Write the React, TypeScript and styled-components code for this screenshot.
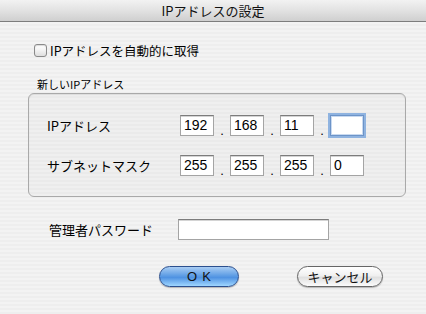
import { Fragment } from 'react';
import styled, { createGlobalStyle } from 'styled-components';

const GlobalStyle = createGlobalStyle`
  html, body {
    margin: 0;
    padding: 0;
  }
  body {
    font-family: "Noto Sans CJK JP", "Liberation Sans", sans-serif;
    color: #000;
  }
`;

const Window = styled.div`
  width: 426px;
  height: 314px;
  overflow: hidden;
  background: repeating-linear-gradient(
    to bottom,
    #eeeeee 0px,
    #eeeeee 2px,
    #f3f3f3 2px,
    #f3f3f3 4px
  );
  display: flex;
  flex-direction: column;
`;

const TitleBar = styled.div`
  height: 21px;
  border-bottom: 1px solid #7d7d7d;
  background: linear-gradient(to bottom, #f2f2f2 0%, #e2e2e2 50%, #cfcfcf 100%);
  display: flex;
  align-items: center;
  justify-content: center;
  font-size: 13px;
  line-height: 21px;
  color: #111;
`;

const Content = styled.div`
  padding: 0 0 0 28px;
  display: flex;
  flex-direction: column;
`;

const CheckRow = styled.label`
  margin-top: 21px;
  margin-left: 6px;
  height: 15px;
  display: flex;
  align-items: center;
  gap: 3px;
  font-size: 12.5px;
  line-height: 15px;
`;

const CheckBox = styled.span`
  width: 11px;
  height: 11px;
  border: 1px solid #8a8a8a;
  border-radius: 3px;
  background: linear-gradient(to bottom, #ffffff 0%, #f2f2f2 50%, #dedede 100%);
  box-shadow: inset 0 1px 1px rgba(0, 0, 0, 0.15);
`;

const GroupLabel = styled.div`
  margin-top: 20px;
  margin-left: 9px;
  font-size: 11px;
  line-height: 13px;
`;

const GroupBox = styled.div`
  margin-top: 2px;
  width: 358px;
  height: 81px;
  border: 1px solid #a9a9a9;
  border-radius: 6px;
  background: rgba(0, 0, 0, 0.015);
  box-shadow: inset 0 1px 1px rgba(0, 0, 0, 0.08);
  padding: 21px 0 0 18px;
  box-sizing: content-box;
  display: flex;
  flex-direction: column;
  gap: 19px;
`;

const FieldRow = styled.div<{ $labelWidth: number }>`
  display: grid;
  grid-template-columns: ${({ $labelWidth }) => $labelWidth}px auto;
  align-items: center;
  height: 21px;
`;

const RowLabel = styled.span`
  font-size: 13px;
  line-height: 15px;
`;

const Octets = styled.div`
  display: flex;
  align-items: flex-end;
`;

const Dot = styled.span`
  width: 16px;
  text-align: center;
  font-size: 13px;
  line-height: 10px;
  font-family: "Liberation Sans", sans-serif;
`;

const Field = styled.div<{ $width: number; $focused?: boolean }>`
  width: ${({ $width }) => $width}px;
  height: 21px;
  box-sizing: border-box;
  background: #fff;
  border: 1px solid #a4a4a4;
  border-top-color: #7c7c7c;
  box-shadow: inset 0 1px 0 #d4d4d4;
  padding: 0 3px;
  font-family: "Liberation Sans", sans-serif;
  font-size: 14px;
  line-height: 18px;
  ${({ $focused }) =>
    $focused &&
    `
    border: 1px solid #6d94c8;
    box-shadow: 0 0 0 2px #8fb3e0, inset 0 0 0 1px #c9daf0;
  `}
`;

const PasswordRow = styled(FieldRow)`
  margin-top: 22px;
  padding-left: 21px;
`;

const Buttons = styled.div`
  margin-top: 26px;
  padding-left: 131px;
  display: flex;
  gap: 58px;
`;

const Button = styled.button<{ $width: number; $primary?: boolean }>`
  width: ${({ $width }) => $width}px;
  height: 21px;
  border-radius: 11px;
  padding: 0;
  font-family: ${({ $primary }) =>
    $primary ? '"Liberation Sans", sans-serif' : '"Noto Sans CJK JP", "Liberation Sans", sans-serif'};
  font-size: 13px;
  line-height: 19px;
  color: #111;
  border: 1px solid ${({ $primary }) => ($primary ? '#2b4f8e' : '#666')};
  background: ${({ $primary }) =>
    $primary
      ? 'linear-gradient(to bottom, #a9cdf3 0%, #5f9ee5 45%, #4f92e2 55%, #9fd6ff 100%)'
      : 'linear-gradient(to bottom, #ffffff 0%, #f0f0f0 45%, #e0e0e0 55%, #fbfbfb 100%)'};
  box-shadow: 0 1px 1px rgba(0, 0, 0, 0.25);
  letter-spacing: ${({ $primary }) => ($primary ? '5px' : '0')};
  text-indent: ${({ $primary }) => ($primary ? '5px' : '0')};
`;

const octets = {
  ip: ['192', '168', '11', ''],
  mask: ['255', '255', '255', '0'],
};

export default function App() {
  return (
    <>
      <GlobalStyle />
      <Window>
        <TitleBar>IPアドレスの設定</TitleBar>
        <Content>
          <CheckRow>
            <CheckBox />
            IPアドレスを自動的に取得
          </CheckRow>
          <GroupLabel>新しいIPアドレス</GroupLabel>
          <GroupBox>
            <FieldRow $labelWidth={133}>
              <RowLabel>IPアドレス</RowLabel>
              <Octets>
                {octets.ip.map((v, i) => (
                  <Fragment key={i}>
                    {i > 0 && <Dot>.</Dot>}
                    <Field $width={34} $focused={i === 3}>
                      {v}
                    </Field>
                  </Fragment>
                ))}
              </Octets>
            </FieldRow>
            <FieldRow $labelWidth={133}>
              <RowLabel>サブネットマスク</RowLabel>
              <Octets>
                {octets.mask.map((v, i) => (
                  <Fragment key={i}>
                    {i > 0 && <Dot>.</Dot>}
                    <Field $width={34}>{v}</Field>
                  </Fragment>
                ))}
              </Octets>
            </FieldRow>
          </GroupBox>
          <PasswordRow $labelWidth={129}>
            <RowLabel>管理者パスワード</RowLabel>
            <Field $width={151} />
          </PasswordRow>
          <Buttons>
            <Button $width={80} $primary>
              OK
            </Button>
            <Button $width={86}>キャンセル</Button>
          </Buttons>
        </Content>
      </Window>
    </>
  );
}
